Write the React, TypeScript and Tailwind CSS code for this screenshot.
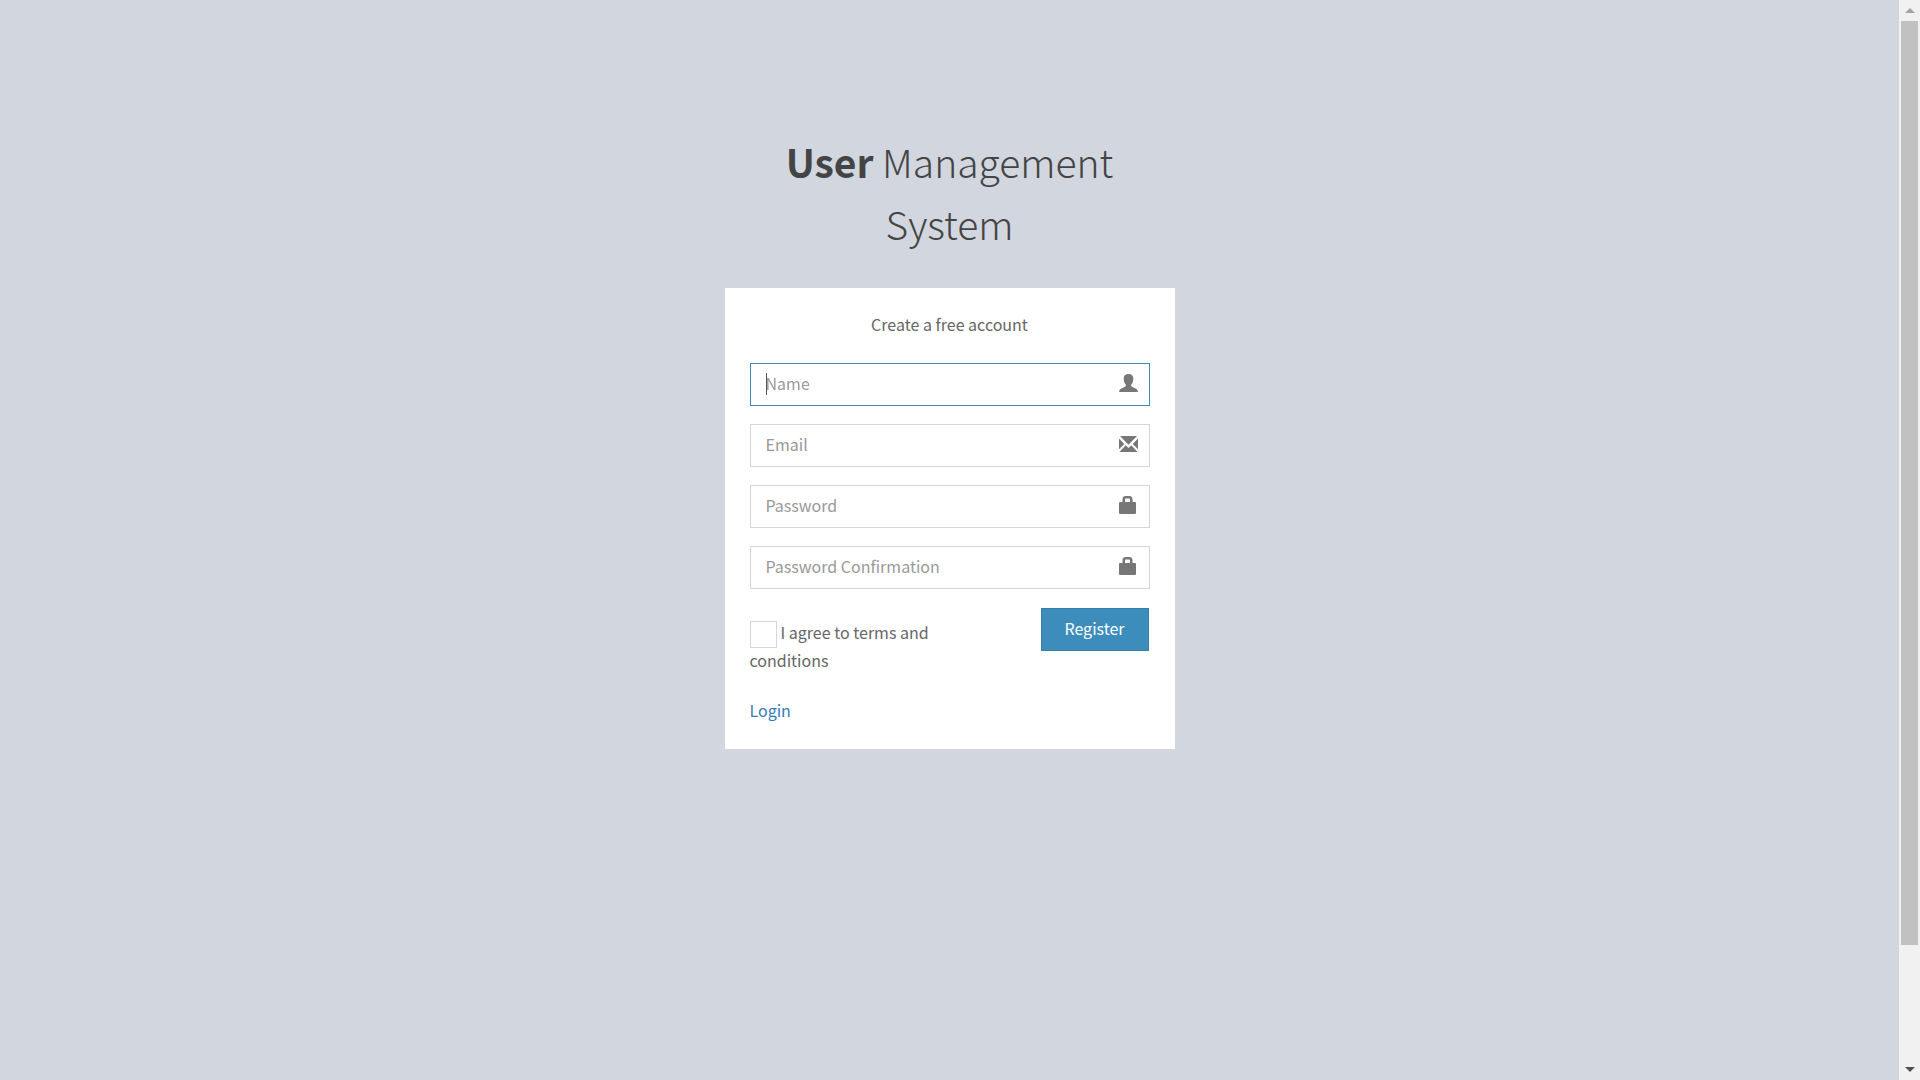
import { useState } from 'react';
import type { FormEvent, ReactNode } from 'react';

function UserIcon() {
  return (
    <svg viewBox="0 0 19 18" className="h-[18px] w-[19px]" fill="currentColor" aria-hidden="true">
      <path d="M9.5 0C6.500 0 4.700 1.600 4.700 4.500c0 2.600.7 4.800 2.100 6.100v1.100c-.2.8-1 1.200-2.200 1.700C2.100 14.500.4 15.300.2 16.900V18h18.600v-1.100c-.2-1.600-1.900-2.400-4.400-3.500-1.200-.5-2-.9-2.200-1.700v-1.100c1.400-1.300 2.100-3.500 2.100-6.100C14.300 1.600 12.500 0 9.500 0Z" />
    </svg>
  );
}

function EnvelopeIcon() {
  return (
    <svg viewBox="0 0 19 16" className="h-4 w-[19px]" fill="currentColor" aria-hidden="true">
      <path d="M1 0h17L9.500 8.800Z" />
      <path d="M0 2.600 5.300 8 0 13.300Z" />
      <path d="M19 2.600 13.700 8 19 13.300Z" />
      <path d="M6.700 9.300 9.500 12l2.800-2.700L18.500 16H.5Z" />
    </svg>
  );
}

function LockIcon() {
  return (
    <svg viewBox="0 0 17 18" className="h-[18px] w-[17px]" fill="currentColor" aria-hidden="true">
      <path
        fillRule="evenodd"
        d="M3.500 6V3.200C3.500 1.200 4.800 0 6.500 0h4c1.700 0 3 1.200 3 3.200V6H16a1 1 0 0 1 1 1v10a1 1 0 0 1-1 1H1a1 1 0 0 1-1-1V7a1 1 0 0 1 1-1ZM6 6h5V3.600c0-.6-.4-1-1-1H7c-.6 0-1 .4-1 1Z"
      />
    </svg>
  );
}

type FieldProps = {
  id: string;
  type: string;
  label: string;
  icon: ReactNode;
  autoFocus?: boolean;
};

function Field({ id, type, label, icon, autoFocus }: FieldProps) {
  const [value, setValue] = useState('');

  return (
    <div className="relative">
      <input
        id={id}
        name={id}
        type={type}
        value={value}
        onChange={(e) => setValue(e.target.value)}
        placeholder=" "
        autoFocus={autoFocus}
        className="peer block h-[43px] w-full border border-[#d2d6de] bg-white pr-12 pb-0.5 pl-[15px] text-[#555] outline-none placeholder-shown:caret-transparent focus:border-[#3c8dbc]"
      />
      {/* the label sits inside the field until something is typed */}
      <label
        htmlFor={id}
        className="absolute top-2 left-4 hidden cursor-text text-[#999] peer-placeholder-shown:block"
      >
        {label}
      </label>
      {/* steady caret while the field is empty */}
      <span className="pointer-events-none absolute top-[10px] left-4 hidden h-[22px] w-px bg-[#555] peer-placeholder-shown:peer-focus:block" />
      <span className="pointer-events-none absolute top-0 right-3 flex h-10 w-[19px] items-center text-[#777]">
        {icon}
      </span>
    </div>
  );
}

function ScrollBar() {
  return (
    <div className="sticky top-0 flex h-screen w-[21px] shrink-0 flex-col bg-[#f1f1f1]" aria-hidden="true">
      <div className="flex h-[21px] items-center justify-center text-[#a3a3a3]">
        <svg viewBox="0 0 10 5" className="h-[5px] w-[10px]" fill="currentColor">
          <path d="M5 0l5 5H0Z" />
        </svg>
      </div>
      <div className="flex-1 px-0.5">
        <div className="h-[89%] bg-[#c1c1c1]" />
      </div>
      <div className="flex h-[21px] items-center justify-center text-[#505050]">
        <svg viewBox="0 0 10 5" className="h-[5px] w-[10px]" fill="currentColor">
          <path d="M0 0h10L5 5Z" />
        </svg>
      </div>
    </div>
  );
}

export default function App() {
  const [agree, setAgree] = useState(false);

  const handleSubmit = (e: FormEvent) => {
    e.preventDefault();
  };

  return (
    <div className="flex min-h-screen bg-[#d2d6de] font-['Source_Sans_Pro','Noto_Sans_CJK_SC','Open_Sans',sans-serif] text-[16px] leading-[25px] text-[#666]">
      <main className="flex-1 pt-[130px]">
        <div className="mx-auto w-full max-w-[450px]">
          <h1 className="mb-[34px] text-center text-[39px] leading-[62px] font-light text-[#444]">
            <a href="#">
              <b className="font-bold">User</b> Management System
            </a>
          </h1>

          <div className="bg-white px-[25px] pt-6 pb-[26px]">
            <p className="mb-[26px] text-center">Create a free account</p>

            <form onSubmit={handleSubmit}>
              <div className="flex flex-col gap-[18px]">
                <Field id="name" type="text" label="Name" icon={<UserIcon />} autoFocus />
                <Field id="email" type="email" label="Email" icon={<EnvelopeIcon />} />
                <Field id="password" type="password" label="Password" icon={<LockIcon />} />
                <Field
                  id="password_confirmation"
                  type="password"
                  label="Password Confirmation"
                  icon={<LockIcon />}
                />
              </div>

              <div className="mt-[19px] flex items-start justify-between pr-px">
                <label htmlFor="agree" className="mt-3 w-[212px]">
                  <input
                    id="agree"
                    type="checkbox"
                    checked={agree}
                    onChange={(e) => setAgree(e.target.checked)}
                    className="mr-1 inline-block size-[27px] appearance-none border border-[#d2d6de] bg-white align-middle checked:bg-[#3c8dbc]"
                  />
                  I agree to terms and conditions
                </label>
                <button
                  type="submit"
                  className="h-[43px] w-[108px] border border-[#367fa9] bg-[#3c8dbc] pb-0.5 text-white"
                >
                  Register
                </button>
              </div>
            </form>

            <a href="#" className="mt-[25px] inline-block text-[#337ab7]">
              Login
            </a>
          </div>
        </div>
      </main>
      <ScrollBar />
    </div>
  );
}
